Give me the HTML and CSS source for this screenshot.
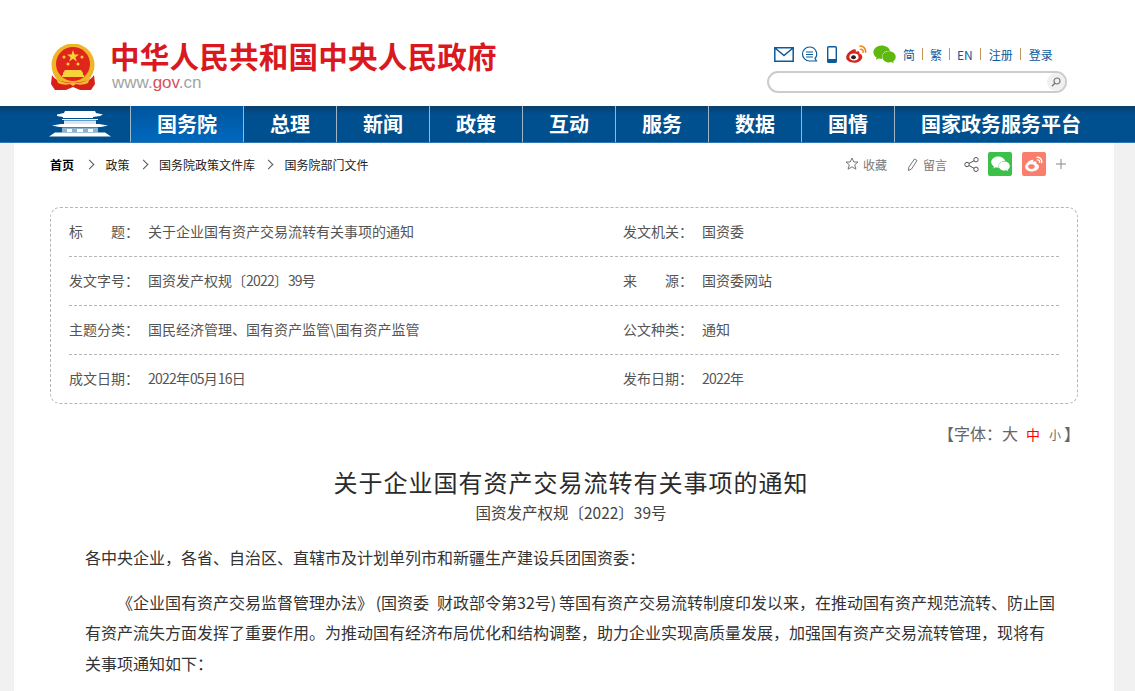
FILE: index.html
```html
<!DOCTYPE html>
<html lang="zh-CN">
<head>
  <meta charset="UTF-8" />
  <title>关于企业国有资产交易流转有关事项的通知</title>
  <link rel="stylesheet" href="styles.css">
</head>
<body>
  <svg class="defs" width="0" height="0">
    <defs>
      <symbol id="wechat" viewBox="0 0 24 20">
        <path d="M9 0.5C4.2 0.5 0.3 3.7 0.3 7.6c0 2.3 1.3 4.2 3.4 5.5l-0.8 2.5 2.9-1.5c1 0.3 2.1 0.5 3.2 0.5h0.8c-0.2-0.7-0.3-1.3-0.3-2 0-3.6 3.4-6.5 7.7-6.5h0.7C17 3 13.3 0.5 9 0.5z"/>
        <path d="M23.8 12.5c0-3.2-3.2-5.8-7-5.8s-7 2.6-7 5.8 3.2 5.8 7 5.8c0.9 0 1.8-0.1 2.6-0.4l2.4 1.4-0.7-2.2c1.6-1.1 2.7-2.7 2.7-4.6z"/>
      </symbol>
    </defs>
  </svg>

  <header class="top">
    <div class="logo">
      <svg class="emblem" width="44" height="47" viewBox="0 0 44 47">
        <circle cx="22" cy="21" r="21.500" fill="#f0b429"/>
        <circle cx="22" cy="20" r="17" fill="#e0261c"/>
        <polygon points="22,6 23.500,10.500 28,10.500 24.400,13.200 25.800,17.500 22,14.800 18.200,17.500 19.600,13.200 16,10.500 20.500,10.500" fill="#f8d23a"/>
        <circle cx="13" cy="13" r="1.500" fill="#f8d23a"/>
        <circle cx="31" cy="13" r="1.500" fill="#f8d23a"/>
        <circle cx="17" cy="20" r="1.500" fill="#f8d23a"/>
        <circle cx="27" cy="20" r="1.500" fill="#f8d23a"/>
        <path d="M14 26h16l2 3v2H12v-2zM11 31h22v2H11z" fill="#f8d23a"/>
        <path d="M1 31c3 5 8 7 21 8 13-1 18-3 21-8l1 9-4 6H29l-7-3-7 3H4l-4-6z" fill="#d8201a"/>
        <path d="M5 34c4 4 9 5 17 5s13-1 17-5l-2 5c-4 2-9 2-12 1l-3 2-3-2c-3 1-8 1-12-1z" fill="#f2bb2e"/>
      </svg>
      <div class="logo-text">
        <div class="site-name">中华人民共和国中央人民政府</div>
        <div class="site-url">www.<span class="red">gov</span>.cn</div>
      </div>
    </div>
    <div class="top-right">
      <div class="top-links">
        <svg class="ic-mail" width="20" height="15" viewBox="0 0 20 15"><path d="M0.800 0.800h18.400v13.400H0.800zM1 1l9 7.500L19 1" fill="none" stroke="#0c5a99" stroke-width="1.500"/></svg>
        <svg class="ic-msg" width="17" height="17" viewBox="0 0 17 17"><path d="M8.500 1a7 7 0 1 0 0 14h7l-1.500-2.500A7 7 0 0 0 8.500 1z" fill="none" stroke="#0c5a99" stroke-width="1.200"/><path d="M5 6h7M5 8.500h7M5 11h7" stroke="#0c5a99" stroke-width="1"/></svg>
        <svg class="ic-phone" width="10" height="17" viewBox="0 0 10 17"><rect x="0.700" y="0.700" width="8.600" height="15.600" rx="1" fill="none" stroke="#0c5a99" stroke-width="1.400"/><rect x="0.700" y="13" width="8.600" height="3.300" fill="#0c5a99"/></svg>
        <svg class="ic-weibo" width="21" height="18" viewBox="0 0 21 18">
          <path d="M8.500 17.700c-4.400 0-8.300-2-8.300-5.200 0-1.700 1-3.600 2.900-5.400 2.500-2.500 5.300-3.600 6.400-2.600 0.500 0.500 0.500 1.200 0.200 2.200 1.500-0.600 2.800-0.700 3.500 0 0.400 0.500 0.400 1.100 0 1.900 1.800 0.600 3.100 1.600 3.100 3.300 0 2.800-3.600 5.800-7.800 5.800z" fill="#d8231f"/>
          <ellipse cx="8" cy="12" rx="4.600" ry="3.400" fill="#fff"/>
          <ellipse cx="7.500" cy="12.200" rx="2.400" ry="2" fill="#222"/>
          <path d="M14 1.200c3-0.500 6 2.200 5.600 6M14.500 4.200c1.600-0.200 2.900 1.100 2.600 2.900" fill="none" stroke="#f08a1d" stroke-width="1.600" stroke-linecap="round"/>
        </svg>
        <svg class="ic-wechat" width="23" height="19" fill="#5fb80e"><use href="#wechat"/></svg>
        <a class="lang">简</a><i class="sep"></i>
        <a class="lang">繁</a><i class="sep"></i>
        <a class="lang">EN</a><i class="sep sep-w"></i>
        <a class="lang">注册</a><i class="sep sep-w"></i>
        <a class="lang">登录</a>
      </div>
      <div class="search">
        <span class="search-btn">
          <svg width="10" height="10" viewBox="0 0 10 10"><circle cx="6" cy="4" r="3" fill="none" stroke="#777" stroke-width="1.200"/><path d="M3.800 6.200 1 9.200" stroke="#777" stroke-width="1.300"/></svg>
        </span>
      </div>
    </div>
  </header>

  <nav class="nav">
    <div class="nav-logo">
      <svg width="62" height="26" viewBox="0 0 62 26" fill="#fff">
        <path d="M8 3.500 15 2 16 0h30l1 2 7 1.500-3 1.500-7 1v1H14V6L8 5z"/>
        <path d="M13 8h36v1H13z"/>
        <path d="M15 9.500h32V13H15z" fill="#d7e6f2"/>
        <path d="M3 14.500 12 13h38l9 1.500-7 1.500H10z"/>
        <path d="M13 16.500h36v5H13z" fill="#8fb4d2"/>
        <path d="M6 21.500h50l6 4H0z"/>
        <path d="M18 18h5v3h-5zM28 18h6v3h-6zM39 18h5v3h-5z" fill="#fff"/>
      </svg>
    </div>
    <a class="nav-item on">国务院</a>
    <a class="nav-item">总理</a>
    <a class="nav-item">新闻</a>
    <a class="nav-item">政策</a>
    <a class="nav-item">互动</a>
    <a class="nav-item">服务</a>
    <a class="nav-item">数据</a>
    <a class="nav-item">国情</a>
    <a class="nav-item nav-last">国家政务服务平台</a>
  </nav>

  <main class="page">
    <div class="bar">
      <div class="crumbs">
        <b>首页</b><i class="arrow"></i><a>政策</a><i class="arrow"></i><a>国务院政策文件库</a><i class="arrow"></i><a>国务院部门文件</a>
      </div>
      <div class="tools">
        <svg class="t-star" width="14" height="14" viewBox="0 0 14 14"><path d="M7 1l1.800 4h4.200l-3.300 2.800 1.200 4.400L7 9.800l-3.900 2.400 1.200-4.400L1 5h4.200z" fill="none" stroke="#777" stroke-width="1"/></svg>
        <span class="t-txt t-fav">收藏</span>
        <svg class="t-pen" width="11" height="13" viewBox="0 0 11 13"><path d="M7.500 1l2.500 1.500-5.500 8.500-3 1.500 0.300-3.300z" fill="none" stroke="#777" stroke-width="1"/></svg>
        <span class="t-txt t-msg">留言</span>
        <svg class="t-share" width="15" height="15" viewBox="0 0 15 15" fill="none" stroke="#555" stroke-width="1"><circle cx="3" cy="7.500" r="2.200"/><circle cx="12" cy="2.700" r="2.200"/><circle cx="12" cy="12.300" r="2.200"/><path d="M5 6.500l5-2.800M5 8.500l5 2.800"/></svg>
        <span class="share-box wx"><svg width="19" height="16" fill="#fff"><use href="#wechat"/></svg></span>
        <span class="share-box wb">
          <svg width="18" height="16" viewBox="0 0 21 18">
            <path d="M8.500 17.700c-4.400 0-8.300-2-8.300-5.200 0-1.700 1-3.600 2.900-5.400 2.500-2.500 5.300-3.600 6.400-2.600 0.500 0.500 0.500 1.200 0.200 2.200 1.500-0.600 2.800-0.700 3.500 0 0.400 0.500 0.400 1.100 0 1.900 1.800 0.600 3.100 1.600 3.100 3.300 0 2.800-3.600 5.800-7.800 5.800z" fill="#fff"/>
            <ellipse cx="7.500" cy="12" rx="3.800" ry="2.800" fill="#f97f6c"/>
            <path d="M14 1.200c3-0.500 6 2.200 5.600 6M14.500 4.200c1.600-0.200 2.900 1.100 2.600 2.900" fill="none" stroke="#fff" stroke-width="1.600" stroke-linecap="round"/>
          </svg>
        </span>
        <svg class="t-plus" width="10" height="10" viewBox="0 0 10 10"><path d="M5 0v10M0 5h10" stroke="#888" stroke-width="1"/></svg>
      </div>
    </div>

    <div class="info">
      <div class="info-row">
        <div class="info-cell"><span class="lb">标　　题：</span><span>关于企业国有资产交易流转有关事项的通知</span></div>
        <div class="info-cell"><span class="lb">发文机关：</span><span>国资委</span></div>
      </div>
      <div class="info-row">
        <div class="info-cell"><span class="lb">发文字号：</span><span>国资发产权规〔<span class="num">2022</span>〕<span class="num">39</span>号</span></div>
        <div class="info-cell"><span class="lb">来　　源：</span><span>国资委网站</span></div>
      </div>
      <div class="info-row">
        <div class="info-cell"><span class="lb">主题分类：</span><span>国民经济管理、国有资产监管\国有资产监管</span></div>
        <div class="info-cell"><span class="lb">公文种类：</span><span>通知</span></div>
      </div>
      <div class="info-row">
        <div class="info-cell"><span class="lb">成文日期：</span><span><span class="num">2022</span>年<span class="num">05</span>月<span class="num">16</span>日</span></div>
        <div class="info-cell"><span class="lb">发布日期：</span><span><span class="num">2022</span>年</span></div>
      </div>
    </div>

    <div class="font-size">【字体：<a class="fs-l">大</a><a class="fs-m">中</a><a class="fs-s">小</a>】</div>

    <h1 class="title">关于企业国有资产交易流转有关事项的通知</h1>
    <div class="doc-no">国资发产权规〔2022〕39号</div>

    <div class="article">
      <p>各中央企业，各省、自治区、直辖市及计划单列市和新疆生产建设兵团国资委：</p>
      <p class="indent">《企业国有资产交易监督管理办法》&#8198;(国资委&#8194;财政部令第32号)&#8198;等国有资产交易流转制度印发以来，在推动国有资产规范流转、防止国有资产流失方面发挥了重要作用。为推动国有经济布局优化和结构调整，助力企业实现高质量发展，加强国有资产交易流转管理，现将有关事项通知如下：</p>
    </div>
  </main>
</body>
</html>
```

FILE: styles.css
```css
* {
  box-sizing: border-box;
}
html, body {
  margin: 0;
  padding: 0;
  height: 100%;
  overflow: hidden;
}
body {
  background: #f1f1f1;
  font-family: "Noto Sans CJK SC", "Liberation Sans", sans-serif;
  color: #333;
}
a {
  color: inherit;
  text-decoration: none;
}
.defs {
  display: block;
  height: 0;
}

/* top */
.top {
  height: 106px;
  background: #fff;
  display: flex;
  justify-content: space-between;
  padding: 41px 68px 0 51px;
}
.logo {
  display: flex;
  gap: 16px;
}
.emblem {
  margin-top: 3px;
}
.site-name {
  font-size: 29.600px;
  letter-spacing: 0.15px;
  line-height: 30px;
  font-weight: 700;
  color: #d9181f;
  white-space: nowrap;
  margin-left: -1px;
}
.site-url {
  font-family: "Liberation Sans", sans-serif;
  font-size: 17px;
  line-height: 20px;
  margin: 2px 0 0 1px;
  color: #a3a3a3;
}
.red {
  color: #d9515a;
}
.top-right {
  width: 300px;
  margin-top: 2px;
}
.top-links {
  display: flex;
  align-items: center;
  height: 22px;
  padding-left: 7px;
  font-size: 12px;
  color: #0b5a9c;
}
.ic-msg { margin-left: 7px; }
.ic-phone { margin-left: 9px; }
.ic-weibo { margin-left: 9px; }
.ic-wechat { margin-left: 6px; }
.lang:first-of-type { margin-left: 7px; }
.sep {
  width: 1px;
  height: 12px;
  margin: 0 7px;
  background: #c7935a;
}
.sep-w {
  margin-right: 8px;
}
.search {
  height: 22px;
  margin-top: 6px;
  border: 2px solid #ccc;
  border-radius: 11px;
  background: #fff;
  display: flex;
  justify-content: flex-end;
  align-items: center;
}
.search-btn {
  width: 18px;
  height: 18px;
  border-radius: 50%;
  background: #f0f0f0;
  display: flex;
  align-items: center;
  justify-content: center;
}

/* nav */
.nav {
  height: 37px;
  display: flex;
  background: linear-gradient(#0a3d6b 0, #00508f 22%, #00508f 100%);
  border-bottom: 1px solid #2d78b4;
}
.nav-logo {
  width: 130px;
  padding: 5px 0 0 49px;
}
.nav-item {
  width: 93px;
  border-left: 1px solid #9fb5c8;
  color: #fff;
  font-size: 20px;
  font-weight: 700;
  line-height: 35px;
  text-align: center;
}
.nav-item.on {
  width: 113px;
  background: linear-gradient(#00559d, #0069bf);
}
.nav-last {
  width: 241px;
  padding-right: 28px;
}

/* main */
.page {
  width: 1100px;
  margin-left: 14px;
  height: 548px;
  background: #fff;
  padding: 0 36px;
}
.bar {
  height: 64px;
  display: flex;
  justify-content: space-between;
  padding-top: 9px;
}
.crumbs {
  display: flex;
  align-items: center;
  height: 24px;
  font-size: 12px;
  color: #222;
}
.crumbs b {
  color: #000;
  margin-right: 2px;
}
.arrow {
  width: 7px;
  height: 7px;
  margin: 0 12.500px 0 10px;
  border-top: 1px solid #555;
  border-right: 1px solid #555;
  transform: rotate(45deg);
}
.tools {
  display: flex;
  align-items: center;
  height: 24px;
  margin-right: 12px;
  font-size: 12px;
  color: #777;
}
.t-fav { margin-left: 4px; }
.t-pen { margin-left: 20px; }
.t-msg { margin-left: 5px; }
.t-share { margin-left: 17px; }
.share-box {
  width: 24px;
  height: 24px;
  border-radius: 2px;
  display: flex;
  align-items: center;
  justify-content: center;
}
.wx {
  margin-left: 9px;
  background: #3cc04a;
}
.wb {
  margin-left: 10px;
  background: #f97f6c;
}
.t-plus { margin-left: 10px; margin-top: -1px; }

/* info table */
.info {
  height: 197px;
  border: 1px dashed #b5b5b5;
  border-radius: 10px;
  padding: 0 18px;
  font-size: 14px;
  color: #555;
}
.info-row {
  height: 49px;
  display: flex;
  align-items: center;
  padding-bottom: 2px;
  border-bottom: 1px dashed #b5b5b5;
}
.info-row:last-child {
  border-bottom: 0;
  padding-bottom: 3px;
}
.info-cell {
  flex: 0 0 554px;
  display: flex;
}
.info-cell + .info-cell {
  flex: 1;
}
.lb {
  width: 79px;
  flex-shrink: 0;
}
.num {
  letter-spacing: -0.8px;
}

.font-size {
  margin: 17px -2px 0 0;
  text-align: right;
  font-size: 16px;
  line-height: 24px;
  color: #666;
}
.fs-l { font-size: 16px; margin-right: 8px; }
.fs-m { font-size: 14px; color: #f00; margin-right: 9px; }
.fs-s { font-size: 12px; margin-right: 3px; }

.title {
  margin: 17px 0 0;
  padding-left: 14px;
  text-align: center;
  font-size: 24px;
  letter-spacing: 1px;
  font-weight: 400;
  line-height: 36px;
  color: #2b2b2b;
}
.doc-no {
  margin-top: 0;
  padding-left: 14px;
  text-align: center;
  font-size: 15.500px;
  line-height: 24px;
  color: #444;
}
.article {
  margin-top: 18px;
  padding: 0 23px 0 35px;
  font-size: 16px;
  line-height: 30.500px;
  color: #333;
}
.article p {
  margin: 0 0 14px;
}
.indent {
  text-indent: 2em;
}
```
